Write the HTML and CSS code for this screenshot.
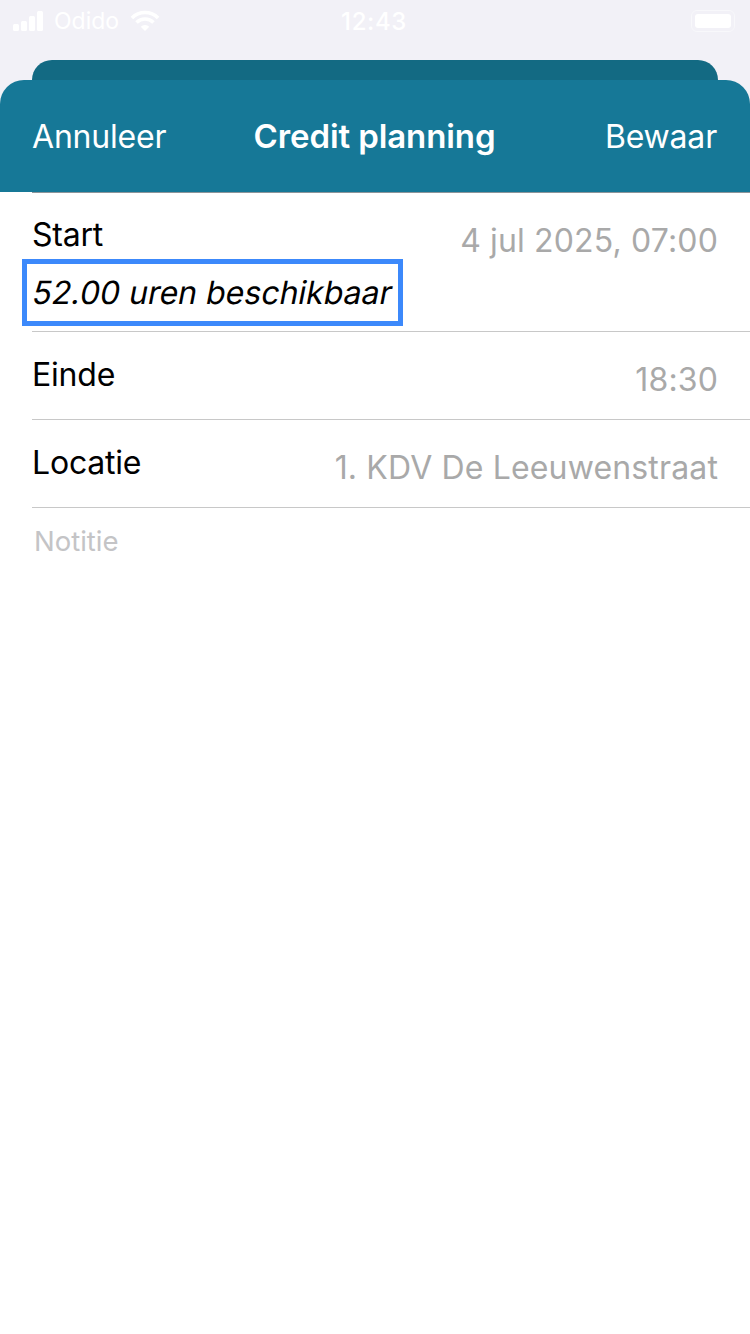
FILE: index.html
```html
<!doctype html>
<html lang="nl">
  <head>
    <meta charset="utf-8" />
    <title>Credit planning</title>
    <meta name="viewport" content="width=device-width, initial-scale=1" />
    <link rel="stylesheet" href="styles.css">
  </head>
  <body>
    <div id="wrapper">
      <div class="top">
        <div class="status-bar">
          <div class="status-left">
            <div class="signal">
              <span class="bar-1"></span>
              <span class="bar-2"></span>
              <span class="bar-3"></span>
              <span class="bar-4"></span>
            </div>
            <span class="carrier">Odido</span>
            <svg class="wifi" width="30" height="22" viewBox="0 0 30 22">
              <path class="wifi-arc" d="M1.920 7.920A18.500 18.500 0 0 1 28.080 7.920" />
              <path class="wifi-arc" d="M6.510 12.510A12 12 0 0 1 23.490 12.510" />
              <path d="M15 21L10.760 16.760A6 6 0 0 1 19.240 16.760Z" />
            </svg>
          </div>
          <span class="time">12:43</span>
          <div class="battery"><span class="battery-fill"></span></div>
        </div>

        <div class="sheet-back"></div>
        <header class="sheet-header">
          <span class="nav-action">Annuleer</span>
          <h1>Credit planning</h1>
          <span class="nav-action nav-save">Bewaar</span>
        </header>
      </div>

      <section class="form">
        <div class="row row-start">
          <div class="start-col">
            <span class="label">Start</span>
            <p class="hours"><span class="hours-text">52.00 uren beschikbaar</span></p>
          </div>
          <span class="value">4 jul 2025, 07:00</span>
        </div>
        <div class="row">
          <span class="label">Einde</span>
          <span class="value">18:30</span>
        </div>
        <div class="row">
          <span class="label">Locatie</span>
          <span class="value">1. KDV De Leeuwenstraat</span>
        </div>
        <p class="note">Notitie</p>
      </section>
    </div>
  </body>
</html>
```

FILE: styles.css
```css
* {
  box-sizing: border-box;
  font-family: Inter, "Liberation Sans", sans-serif;
  margin: 0;
  padding: 0;
}

body {
  width: 750px;
  height: 1334px;
  background: #fff;
  overflow: hidden;
}

#wrapper {
  width: 100%;
}

.top {
  background: #f2f1f7;
}

.status-bar {
  height: 60px;
  padding: 0 15px 18px 13px;
  display: grid;
  grid-template-columns: 1fr auto 1fr;
  align-items: center;
  color: #fff;
}

.status-left {
  display: flex;
  align-items: center;
}

.signal {
  display: flex;
  align-items: flex-end;
  gap: 2px;
  height: 20px;
}

.signal span {
  width: 6px;
  background: #fff;
  border-radius: 1.500px;
}

.bar-1 { height: 7px; }
.bar-2 { height: 10px; }
.bar-3 { height: 15px; }
.bar-4 { height: 20px; }

.carrier {
  font-size: 23px;
  margin-left: 11px;
}

.wifi {
  fill: #fff;
  margin-left: 11px;
}

.wifi-arc {
  fill: none;
  stroke: #fff;
  stroke-width: 3.600px;
}

.time {
  font-size: 24px;
  font-weight: 500;
  letter-spacing: 0.600px;
}

.battery {
  justify-self: end;
  width: 44px;
  height: 22px;
  padding: 3px;
  border: 1px solid #f8f8fb;
  border-radius: 6px;
}

.battery-fill {
  display: block;
  width: 100%;
  height: 100%;
  background: #fff;
  border-radius: 3px;
}

.sheet-back {
  height: 20px;
  margin: 0 32px;
  background: #136a83;
  border-radius: 20px 20px 0 0;
}

.sheet-header {
  height: 112px;
  padding: 0 33px 0 32px;
  background: #167897;
  border-radius: 24px 24px 0 0;
  display: grid;
  grid-template-columns: 1fr auto 1fr;
  align-items: center;
  color: #fff;
}

.nav-action {
  font-size: 32px;
  letter-spacing: -0.200px;
}

.nav-save {
  justify-self: end;
}

h1 {
  font-size: 33px;
  font-weight: 600;
  letter-spacing: -0.100px;
}

.form {
  margin-left: 32px;
  border-top: 1px solid #8d959a;
}

.row {
  height: 88px;
  padding-right: 32px;
  border-bottom: 1px solid #c8c8c8;
  display: flex;
  justify-content: space-between;
  align-items: flex-start;
}

.row-start {
  height: 139px;
}

.label {
  display: block;
  font-size: 32px;
  letter-spacing: -0.200px;
  line-height: 36px;
  margin-top: 25px;
  color: #000;
}

.row-start .label {
  margin-top: 24px;
}

.value {
  font-size: 32px;
  letter-spacing: 0.150px;
  line-height: 36px;
  margin-top: 30px;
  color: #a9a9a9;
}

.hours {
  width: 381px;
  height: 67px;
  margin: 6px 0 0 -10px;
  padding: 0 0 0 6px;
  border: 5px solid #3c89fb;
  display: flex;
  align-items: center;
  white-space: nowrap;
  color: #000;
}

.hours-text {
  display: inline-block;
  font-size: 32px;
  transform: skewX(-11deg);
}

.note {
  font-size: 27.500px;
  line-height: 32px;
  margin: 17px 0 0 2px;
  color: #c4c4c6;
}
```
